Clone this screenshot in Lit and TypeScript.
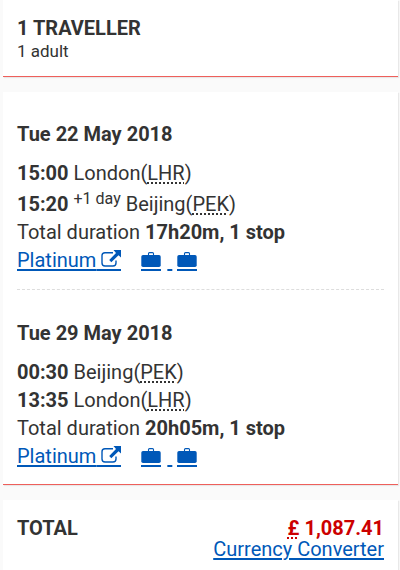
import { LitElement, html, css, nothing } from "lit";
import { customElement, property } from "lit/decorators.js";

interface Stop {
  time: string;
  city: string;
  code: string;
  airport: string;
  plusDays?: string;
}

interface Flight {
  date: string;
  stops: Stop[];
  duration: string;
  fare: string;
}

const FLIGHTS: Flight[] = [
  {
    date: "Tue 22 May 2018",
    stops: [
      { time: "15:00", city: "London", code: "LHR", airport: "Heathrow" },
      { time: "15:20", city: "Beijing", code: "PEK", airport: "Beijing Capital", plusDays: "+1 day" },
    ],
    duration: "17h20m, 1 stop",
    fare: "Platinum",
  },
  {
    date: "Tue 29 May 2018",
    stops: [
      { time: "00:30", city: "Beijing", code: "PEK", airport: "Beijing Capital" },
      { time: "13:35", city: "London", code: "LHR", airport: "Heathrow" },
    ],
    duration: "20h05m, 1 stop",
    fare: "Platinum",
  },
];

const shared = css`
  h2,
  p {
    margin: 0;
    font-size: 20px;
    line-height: 28px;
  }
  a {
    color: #0058b8;
    text-decoration: underline;
    text-decoration-thickness: 2px;
    text-underline-offset: 2px;
  }
  abbr {
    text-decoration: underline dotted 2px;
    text-underline-offset: 2px;
  }
`;

const externalIcon = html`<svg class="external" viewBox="0 0 20 17" aria-hidden="true">
  <path d="M12 2.700H4Q1 2.700 1 5.700V13Q1 16 4 16H12Q15 16 15 13V10.500" fill="none" stroke="currentColor" stroke-width="1.400" />
  <path d="M12.500 0H20V7.500L17.500 5.200L10.300 12.200L8.200 10.100L15 3Z" fill="currentColor" />
</svg>`;

const bagIcon = html`<svg class="bag" viewBox="0 0 20 15" aria-hidden="true">
  <path d="M7.500 3.500V1.600Q7.500 0.600 8.500 0.600H11.500Q12.500 0.600 12.500 1.600V3.500" fill="none" stroke="currentColor" stroke-width="1.100" />
  <path d="M2 3H18Q19.700 3 19.700 4.700V13.300Q19.700 15 18 15H2Q0.300 15 0.300 13.300V4.700Q0.300 3 2 3Z" fill="currentColor" />
</svg>`;

@customElement("flight-leg")
export class FlightLeg extends LitElement {
  @property({ attribute: false }) flight!: Flight;

  static styles = [
    shared,
    css`
      :host {
        display: block;
      }
      h2 {
        margin-bottom: 11px;
      }
      .plus {
        font-size: 16px;
        line-height: 16px;
        vertical-align: 7px;
      }
      .next-day {
        padding-top: 3px;
      }
      .fare {
        display: flex;
        gap: 20px;
      }
      .external,
      .bag {
        width: 20px;
        padding-bottom: 2px;
        border-bottom: 2px solid currentColor;
        vertical-align: -4px;
      }
      .external {
        height: 17px;
      }
      .bag {
        height: 15px;
      }
      .bags {
        white-space: pre;
      }
      .bag:first-child {
        margin-right: 6px;
      }
      .bag:last-child {
        margin-left: 5px;
      }
    `,
  ];

  render() {
    const f = this.flight;
    return html`
      <h2>${f.date}</h2>
      ${f.stops.map(
        (s) => html`<p class=${s.plusDays ? "next-day" : ""}><b>${s.time}</b> ${s.plusDays
          ? html`<span class="plus">${s.plusDays}</span> `
          : nothing}${s.city}(<abbr title=${s.airport}>${s.code}</abbr>)</p>`
      )}
      <p>Total duration <b>${f.duration}</b></p>
      <p class="fare">
        <a href="#fare">${f.fare} ${externalIcon}</a>
        <a class="bags" href="#baggage" aria-label="Baggage allowance">${bagIcon} ${bagIcon}</a>
      </p>
    `;
  }
}

@customElement("app-root")
export class AppRoot extends LitElement {
  static styles = [
    shared,
    css`
      :host {
        display: block;
        min-height: 100vh;
        box-sizing: border-box;
        padding: 0 2px 0 3px;
        background: #fafafa;
        color: #333;
        font-family: Roboto, "Liberation Sans", sans-serif;
      }
      main {
        display: flex;
        flex-direction: column;
        gap: 15px;
        min-height: 100vh;
      }
      .card {
        background: #fff;
        padding: 14px 14px 0;
        border-bottom: 1px solid #ee5f5b;
        box-shadow: 1px 1px 1px #e8e8e8;
      }
      .travellers .count {
        font-size: 17px;
        line-height: 18px;
        padding-bottom: 16px;
      }
      .flights {
        padding-top: 28px;
        padding-bottom: 14px;
      }
      flight-leg + flight-leg {
        margin-top: 15px;
        padding-top: 29px;
        border-top: 1px dashed #ddd;
      }
      .total {
        flex: 1;
        display: flex;
        justify-content: space-between;
        border-bottom: 0;
      }
      .amount {
        text-align: right;
      }
      .price {
        color: #c00;
        font-weight: 700;
      }
      .converter {
        line-height: 14px;
      }
    `,
  ];

  render() {
    return html`
      <main>
        <section class="card travellers">
          <h2>1 TRAVELLER</h2>
          <p class="count">1 adult</p>
        </section>
        <section class="card flights">
          ${FLIGHTS.map((f) => html`<flight-leg .flight=${f}></flight-leg>`)}
        </section>
        <section class="card total">
          <h2>TOTAL</h2>
          <div class="amount">
            <p class="price"><abbr title="Pound sterling">£</abbr> 1,087.41</p>
            <p class="converter"><a href="#currency">Currency Converter</a></p>
          </div>
        </section>
      </main>
    `;
  }
}
